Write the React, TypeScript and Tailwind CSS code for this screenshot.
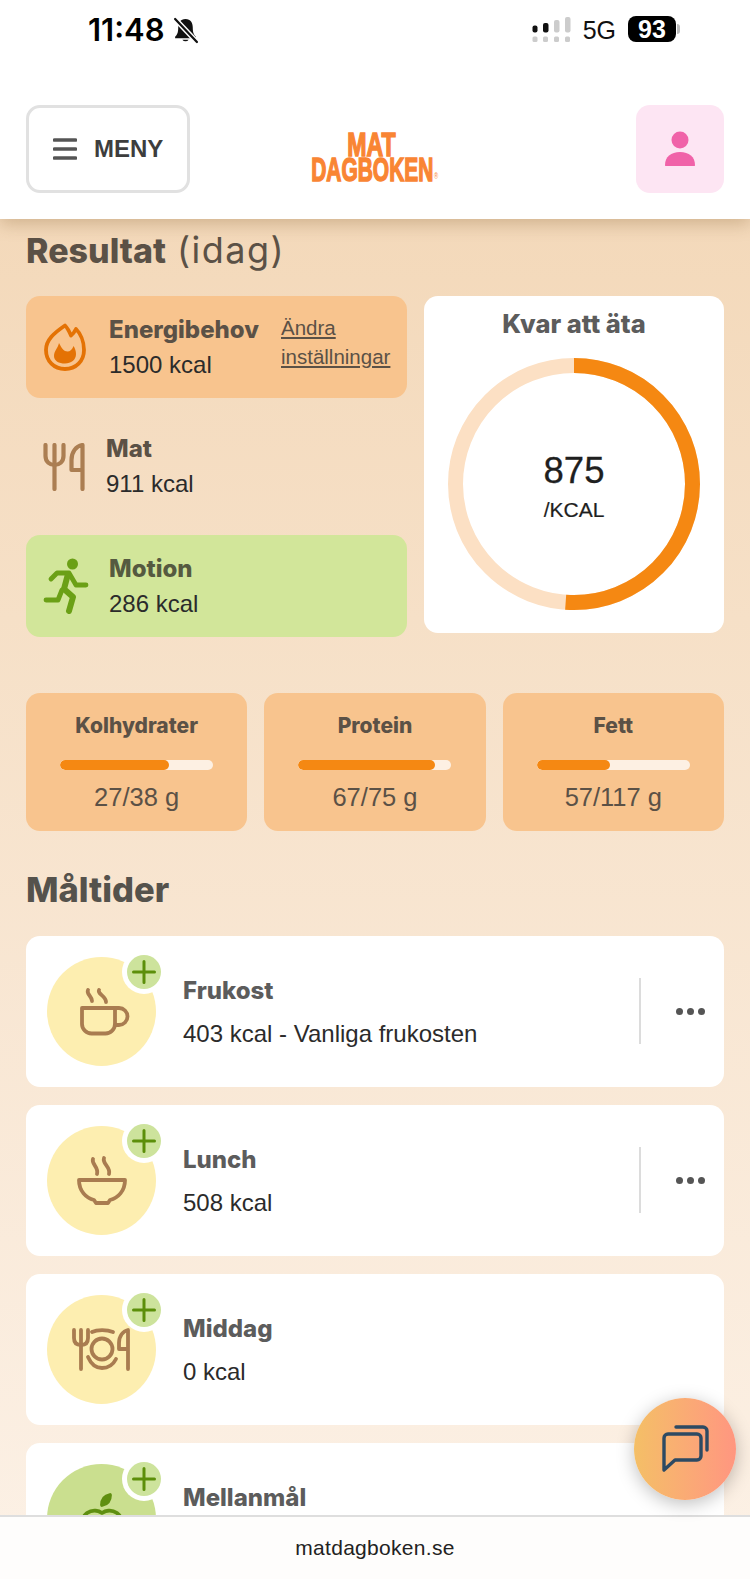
import React from "react";

const sans = "font-['Liberation_Sans',Arial,sans-serif]";
const head = "font-['Inter',sans-serif] font-extrabold";

function Flame() {
  return (
    <svg viewBox="0 0 42 48" className="h-[48px] w-[42px] shrink-0" fill="none">
      <path d="M21 2.500 C24 5.500 25.500 9 27 12.500 C29 11 30.500 9 32 6 C36 10 40 18 40 27 C40 38 32 46 21 46 C10 46 2 38 2 27 C2 17 10 10 21 2.500 Z" stroke="#e47204" strokeWidth="3.800" strokeLinejoin="round" />
      <path d="M15 20 C14 25 10 28 10 33 C10 38 15 40.500 21 40.500 C27 40.500 32 37 32 31 C32 28 31 25 29.500 23 C28.500 26.500 26 28.500 23.500 28.500 C20 28.500 17.500 25 15 20 Z" fill="#e47204" />
    </svg>
  );
}

function ForkKnife() {
  return (
    <svg viewBox="0 0 42 48" className="h-[48px] w-[42px] shrink-0" fill="none" stroke="#ab7e52" strokeWidth="4.200" strokeLinecap="round" strokeLinejoin="round">
      <path d="M2.500 2 V13 C2.500 19 7 22 11.500 22 C16 22 20.500 19 20.500 13 V2" />
      <path d="M11.500 2 V46" />
      <path d="M39.500 46 V2 C33 3 28.500 9 28.500 17 V27 H39.500" />
    </svg>
  );
}

function Runner() {
  return (
    <svg viewBox="0 0 46 56" className="h-[56px] w-[46px] shrink-0" fill="none" stroke="#6ba016" strokeWidth="4.800" strokeLinecap="round" strokeLinejoin="round">
      <circle cx="29.500" cy="6" r="5.500" fill="#6ba016" stroke="none" />
      <path d="M8 21 L14 15 H26 L33 27 H43" />
      <path d="M25 16 L21 31 L30 39 L26 53" strokeWidth="6" />
      <path d="M19 32 L15 42 H3" />
    </svg>
  );
}

function Person() {
  return (
    <svg viewBox="0 0 32 36" className="h-[36px] w-[32px]" fill="#f062a8">
      <ellipse cx="16" cy="9" rx="8.500" ry="8.500" />
      <path d="M1 34 C1 26 7 21 16 21 C25 21 31 26 31 34 C31 35 30.500 35 30 35 H2 C1.500 35 1 35 1 34 Z" />
    </svg>
  );
}

function Cup() {
  return (
    <svg viewBox="0 0 109 109" className="h-full w-full" fill="none" stroke="#a97c50" strokeWidth="3.800" strokeLinecap="round" strokeLinejoin="round">
      <path d="M35 51 H68 V67 A9.500 9.500 0 0 1 58.500 76.500 H44.500 A9.500 9.500 0 0 1 35 67 Z" />
      <path d="M68 51 H72 A8.500 8.500 0 0 1 72 68 H68" />
      <path d="M41 33 C39 37 45 39 45 44" />
      <path d="M52 33 C50 37 59 39 59 45" />
    </svg>
  );
}

function Bowl() {
  return (
    <svg viewBox="0 0 109 109" className="h-full w-full" fill="none" stroke="#a97c50" strokeWidth="3.800" strokeLinecap="round" strokeLinejoin="round">
      <path d="M32 54 H78 C78 65 71 72 63 74 L61 77 H49 L47 74 C39 72 32 65 32 54 Z" />
      <path d="M46 33 C44 38 52 41 50 48" />
      <path d="M57 32 C55 38 64 41 62 48" />
    </svg>
  );
}

function Plate() {
  return (
    <svg viewBox="0 0 109 109" className="h-full w-full" fill="none" stroke="#a97c50" strokeWidth="3.800" strokeLinecap="round" strokeLinejoin="round">
      <path d="M27 35 V43 C27 48 30 50 34 50 C38 50 41 48 41 43 V35" />
      <path d="M34 35 V74" />
      <path d="M81 74 V35 C76 36 72 41 72 48 V54 H81" />
      <circle cx="55" cy="54" r="10.500" />
      <path d="M45 37 C50 34.500 60 34.500 66 37" />
      <path d="M41 62 C44 69 49 73 55 73 C61 73 66 70 69 64" />
    </svg>
  );
}

function Apple() {
  return (
    <svg viewBox="0 0 109 109" className="h-full w-full" fill="none" stroke="#5f8f10" strokeWidth="3.800" strokeLinecap="round" strokeLinejoin="round">
      <path d="M55 41 C55 35 58 32 63 31 C63 37 60 40 55 41 Z" fill="#5f8f10" />
      <path d="M38 80 C32 68 33 54 40 49 C46 45 52 47 55 49 C58 47 64 45 70 49 C77 54 78 68 72 80" />
    </svg>
  );
}

type Meal = { name: string; text: string; icon: React.ReactNode; bg: string; more?: boolean };

const meals: Meal[] = [
  { name: "Frukost", text: "403 kcal - Vanliga frukosten", icon: <Cup />, bg: "bg-[#fdeeb0]", more: true },
  { name: "Lunch", text: "508 kcal", icon: <Bowl />, bg: "bg-[#fdeeb0]", more: true },
  { name: "Middag", text: "0 kcal", icon: <Plate />, bg: "bg-[#fdeeb0]" },
  { name: "Mellanmål", text: "", icon: <Apple />, bg: "bg-[#cadf8f]" },
];

const macros = [
  { name: "Kolhydrater", value: "27/38 g", pct: 71 },
  { name: "Protein", value: "67/75 g", pct: 89 },
  { name: "Fett", value: "57/117 g", pct: 48 },
];

function MealCard({ meal }: { meal: Meal }) {
  return (
    <div className="flex h-[151.500px] shrink-0 items-center rounded-[14px] bg-white pl-[21px]">
      <div className={`relative h-[109px] w-[109px] shrink-0 rounded-full ${meal.bg}`}>
        {meal.icon}
        <div className="absolute left-[75px] top-[-7px] flex h-[44px] w-[44px] items-center justify-center rounded-full bg-white">
          <div className="flex h-[34px] w-[34px] items-center justify-center rounded-full bg-[#cde39c]">
            <svg viewBox="0 0 24 24" className="h-[24px] w-[24px]" stroke="#5c8f0a" strokeWidth="3" strokeLinecap="round">
              <path d="M12 1.500 V22.500 M1.500 12 H22.500" />
            </svg>
          </div>
        </div>
      </div>
      <div className="ml-[27px] flex min-w-0 flex-1 flex-col pt-[2px]">
        <div className={`${head} text-[24px] leading-[32px] text-[#5c5c5c]`}>{meal.name}</div>
        <div className={`${sans} mt-[11px] h-[32px] text-[24px] leading-[32px] text-[#2b2b2b]`}>{meal.text}</div>
      </div>
      {meal.more && (
        <div className="flex shrink-0 items-center">
          <div className="h-[66px] w-[2px] bg-[#dcdcdc]" />
          <div className="ml-[35px] mr-[19px] flex w-[29px] justify-between">
            <span className="h-[7px] w-[7px] rounded-full bg-[#555]" />
            <span className="h-[7px] w-[7px] rounded-full bg-[#555]" />
            <span className="h-[7px] w-[7px] rounded-full bg-[#555]" />
          </div>
        </div>
      )}
    </div>
  );
}

export default function App() {
  return (
    <div className={`${sans} relative h-[1579px] w-[750px] overflow-hidden bg-linear-to-b from-[#f2d5b3] to-[#fcf1e6]`}>
      {/* Status bar + header */}
      <header className="relative z-10 h-[219px] bg-white px-[26px] shadow-[0_5px_16px_rgba(120,80,30,0.28)]">
        <div className="flex h-[105px] items-start pl-[62px] pr-[44px] pt-[14px]">
          <span className="font-['Inter',sans-serif] text-[31px] font-semibold leading-[32px] text-black">11:48</span>
          <svg viewBox="0 0 26 26" className="ml-[7px] mt-[3px] h-[27px] w-[27px]">
            <path d="M13 2 C8 2 6 6 6 10 C6 15 5 17 3 19 V20.500 H23 V19 C21 17 20 15 20 10 C20 6 18 2 13 2 Z" fill="#111" />
            <path d="M10 22 A3.500 3 0 0 0 16 22 Z" fill="#111" />
            <path d="M3 2 L24 24" stroke="#fff" strokeWidth="5" />
            <path d="M3 2 L24 24" stroke="#111" strokeWidth="2.200" strokeLinecap="round" />
          </svg>
          <svg viewBox="0 0 39 26" className="ml-auto mt-[3px] h-[26px] w-[39px]">
            <rect x="0.500" y="8.500" width="5" height="7" rx="2" fill="#111" />
            <rect x="11" y="6" width="5.500" height="9.500" rx="2" fill="#111" />
            <rect x="22" y="3" width="5.500" height="12.500" rx="2" fill="#ccc" />
            <rect x="33" y="0" width="5.500" height="15.500" rx="2" fill="#ccc" />
            <rect x="0.500" y="19.500" width="5" height="5.500" rx="1.500" fill="#ccc" />
            <rect x="11" y="19.500" width="5" height="5.500" rx="1.500" fill="#ccc" />
            <rect x="22" y="19.500" width="5" height="5.500" rx="1.500" fill="#ccc" />
            <rect x="33" y="19.500" width="5" height="5.500" rx="1.500" fill="#ccc" />
          </svg>
          <span className="ml-[12px] mt-[1px] text-[25px] leading-[30px] text-[#111]">5G</span>
          <div className="ml-[12px] mt-[2px] flex h-[26px] items-center">
            <div className="flex h-[26px] w-[48px] items-center justify-center rounded-[8px] bg-black text-[25px] font-bold leading-none text-white">93</div>
            <div className="ml-[1px] h-[10px] w-[3px] rounded-r-full bg-[#bbb]" />
          </div>
        </div>
        <div className="flex items-start">
          <div className="flex h-[88px] w-[164px] items-center rounded-[14px] border-[3px] border-[#e1e1e1] pl-[24px]">
            <svg viewBox="0 0 24 22" className="h-[22px] w-[24px]" stroke="#555" strokeWidth="3.600" strokeLinecap="round">
              <path d="M1.500 2 H22.500 M1.500 11 H22.500 M1.500 20 H22.500" />
            </svg>
            <span className="ml-[17px] text-[24px] font-bold leading-none text-[#3d3d3d]">MENY</span>
          </div>
          <div className="ml-[82px] mt-[27px] flex w-[200px] flex-col items-center text-[#f98533]">
            <span className="scale-x-[0.7] text-[33px] font-bold leading-[25px] [-webkit-text-stroke:1.5px_#f98533]">MAT</span>
            <span className="relative scale-x-[0.635] text-[33px] font-bold leading-[25px] [-webkit-text-stroke:1.5px_#f98533]">
              DAGBOKEN
              <span className="absolute bottom-[1px] left-full ml-[1px] text-[9px] font-normal leading-none [-webkit-text-stroke:0]">®</span>
            </span>
          </div>
          <div className="ml-auto flex h-[88px] w-[88px] items-center justify-center rounded-[14px] bg-[#fde5f3]">
            <Person />
          </div>
        </div>
      </header>

      {/* Main */}
      <main className="flex flex-col px-[26px]">
        <h1 className="mt-[10px] flex items-baseline text-[#5b5146]">
          <span className={`${head} text-[34px] leading-[42px]`}>Resultat</span>
          <span className="ml-[11px] font-['Inter',sans-serif] text-[36px] font-normal leading-[42px] tracking-[1.5px]">(idag)</span>
        </h1>

        <div className="mt-[24px] flex gap-[17px]">
          <div className="flex w-[381px] shrink-0 flex-col gap-[17.500px]">
            <div className="flex h-[102px] items-center rounded-[14px] bg-[#f8c48e] pl-[18px]">
              <Flame />
              <div className="ml-[23px] flex flex-col">
                <span className={`${head} text-[24px] leading-[32px] text-[#5b5146]`}>Energibehov</span>
                <span className="mt-[3px] text-[24px] leading-[32px] text-[#2b2b2b]">1500 kcal</span>
              </div>
              <div className="ml-auto mr-[16px] flex w-[110px] flex-col pb-[9px] text-[20.500px] leading-[28.500px] text-[#5b5146] underline">
                <span>Ändra</span>
                <span>inställningar</span>
              </div>
            </div>
            <div className="flex h-[102px] items-center pl-[17px]">
              <ForkKnife />
              <div className="ml-[21px] flex flex-col">
                <span className={`${head} text-[24px] leading-[32px] text-[#5b5146]`}>Mat</span>
                <span className="mt-[3px] text-[24px] leading-[32px] text-[#2b2b2b]">911 kcal</span>
              </div>
            </div>
            <div className="flex h-[102px] items-center rounded-[14px] bg-[#d2e69a] pl-[17px]">
              <Runner />
              <div className="ml-[20px] flex flex-col">
                <span className={`${head} text-[24px] leading-[32px] text-[#555a40]`}>Motion</span>
                <span className="mt-[3px] text-[24px] leading-[32px] text-[#2b2b2b]">286 kcal</span>
              </div>
            </div>
          </div>

          <div className="flex h-[337px] flex-1 flex-col items-center rounded-[14px] bg-white">
            <span className={`${head} mt-[12px] text-[25.500px] leading-[32px] text-[#5c5c5c]`}>Kvar att äta</span>
            <div className="relative mt-[17.500px] h-[252px] w-[252px]">
              <svg viewBox="0 0 252 252" className="h-full w-full -rotate-90" fill="none" strokeWidth="15">
                <circle cx="126" cy="126" r="118.500" stroke="#fce0c4" />
                <circle cx="126" cy="126" r="118.500" stroke="#f58812" strokeDasharray="380.500 744.600" />
              </svg>
              <div className="absolute inset-0 flex flex-col items-center justify-center pt-[6px] text-[#1f1f1f]">
                <span className="text-[36.500px] leading-[42px] [-webkit-text-stroke:0.3px_#1f1f1f]">875</span>
                <span className="mt-[4px] text-[21px] leading-[28px] [-webkit-text-stroke:0.2px_#1f1f1f]">/KCAL</span>
              </div>
            </div>
          </div>
        </div>

        <div className="mt-[55.500px] flex gap-[17px]">
          {macros.map((m) => (
            <div key={m.name} className="flex h-[138px] flex-1 flex-col items-center rounded-[14px] bg-[#f8c48e]">
              <span className={`${head} mt-[19px] text-[21px] leading-[28px] text-[#5b5146]`}>{m.name}</span>
              <div className="mt-[20px] h-[10px] w-[153px] overflow-hidden rounded-full bg-[#fdf0e3]">
                <div className="h-full rounded-full bg-[#f58812]" style={{ width: `${m.pct}%` }} />
              </div>
              <span className="mt-[11px] text-[25.500px] leading-[32px] text-[#5b5146]">{m.value}</span>
            </div>
          ))}
        </div>

        <h2 className={`${head} mt-[38px] text-[34.500px] leading-[42px] text-[#55524c]`}>Måltider</h2>

        <div className="mt-[25px] flex flex-col gap-[17.500px]">
          {meals.map((meal) => (
            <MealCard key={meal.name} meal={meal} />
          ))}
        </div>
      </main>

      {/* Footer */}
      <footer className="absolute inset-x-0 bottom-0 z-10 flex h-[64px] items-center justify-center border-t-2 border-[#dedede] bg-[#fefdfc] pb-[2px]">
        <span className="text-[21px] leading-none tracking-[0.3px] text-[#222]">matdagboken.se</span>
      </footer>

      {/* Chat button */}
      <div className="absolute left-[634px] top-[1398px] z-20 h-[102px] w-[102px] rounded-full bg-linear-to-r from-[#f4bf66] to-[#ff9680] shadow-[0_4px_18px_rgba(0,0,0,0.25)]">
        <svg viewBox="0 0 102 102" className="h-full w-full" fill="none" stroke="#2d4a63" strokeWidth="3.400" strokeLinecap="round" strokeLinejoin="round">
          <path d="M42 29 H69 A4 4 0 0 1 73 33 V52" />
          <path d="M34 36 H63 A4 4 0 0 1 67 40 V58 A4 4 0 0 1 63 62 H41 L30 72 V40 A4 4 0 0 1 34 36 Z" />
        </svg>
      </div>
    </div>
  );
}
